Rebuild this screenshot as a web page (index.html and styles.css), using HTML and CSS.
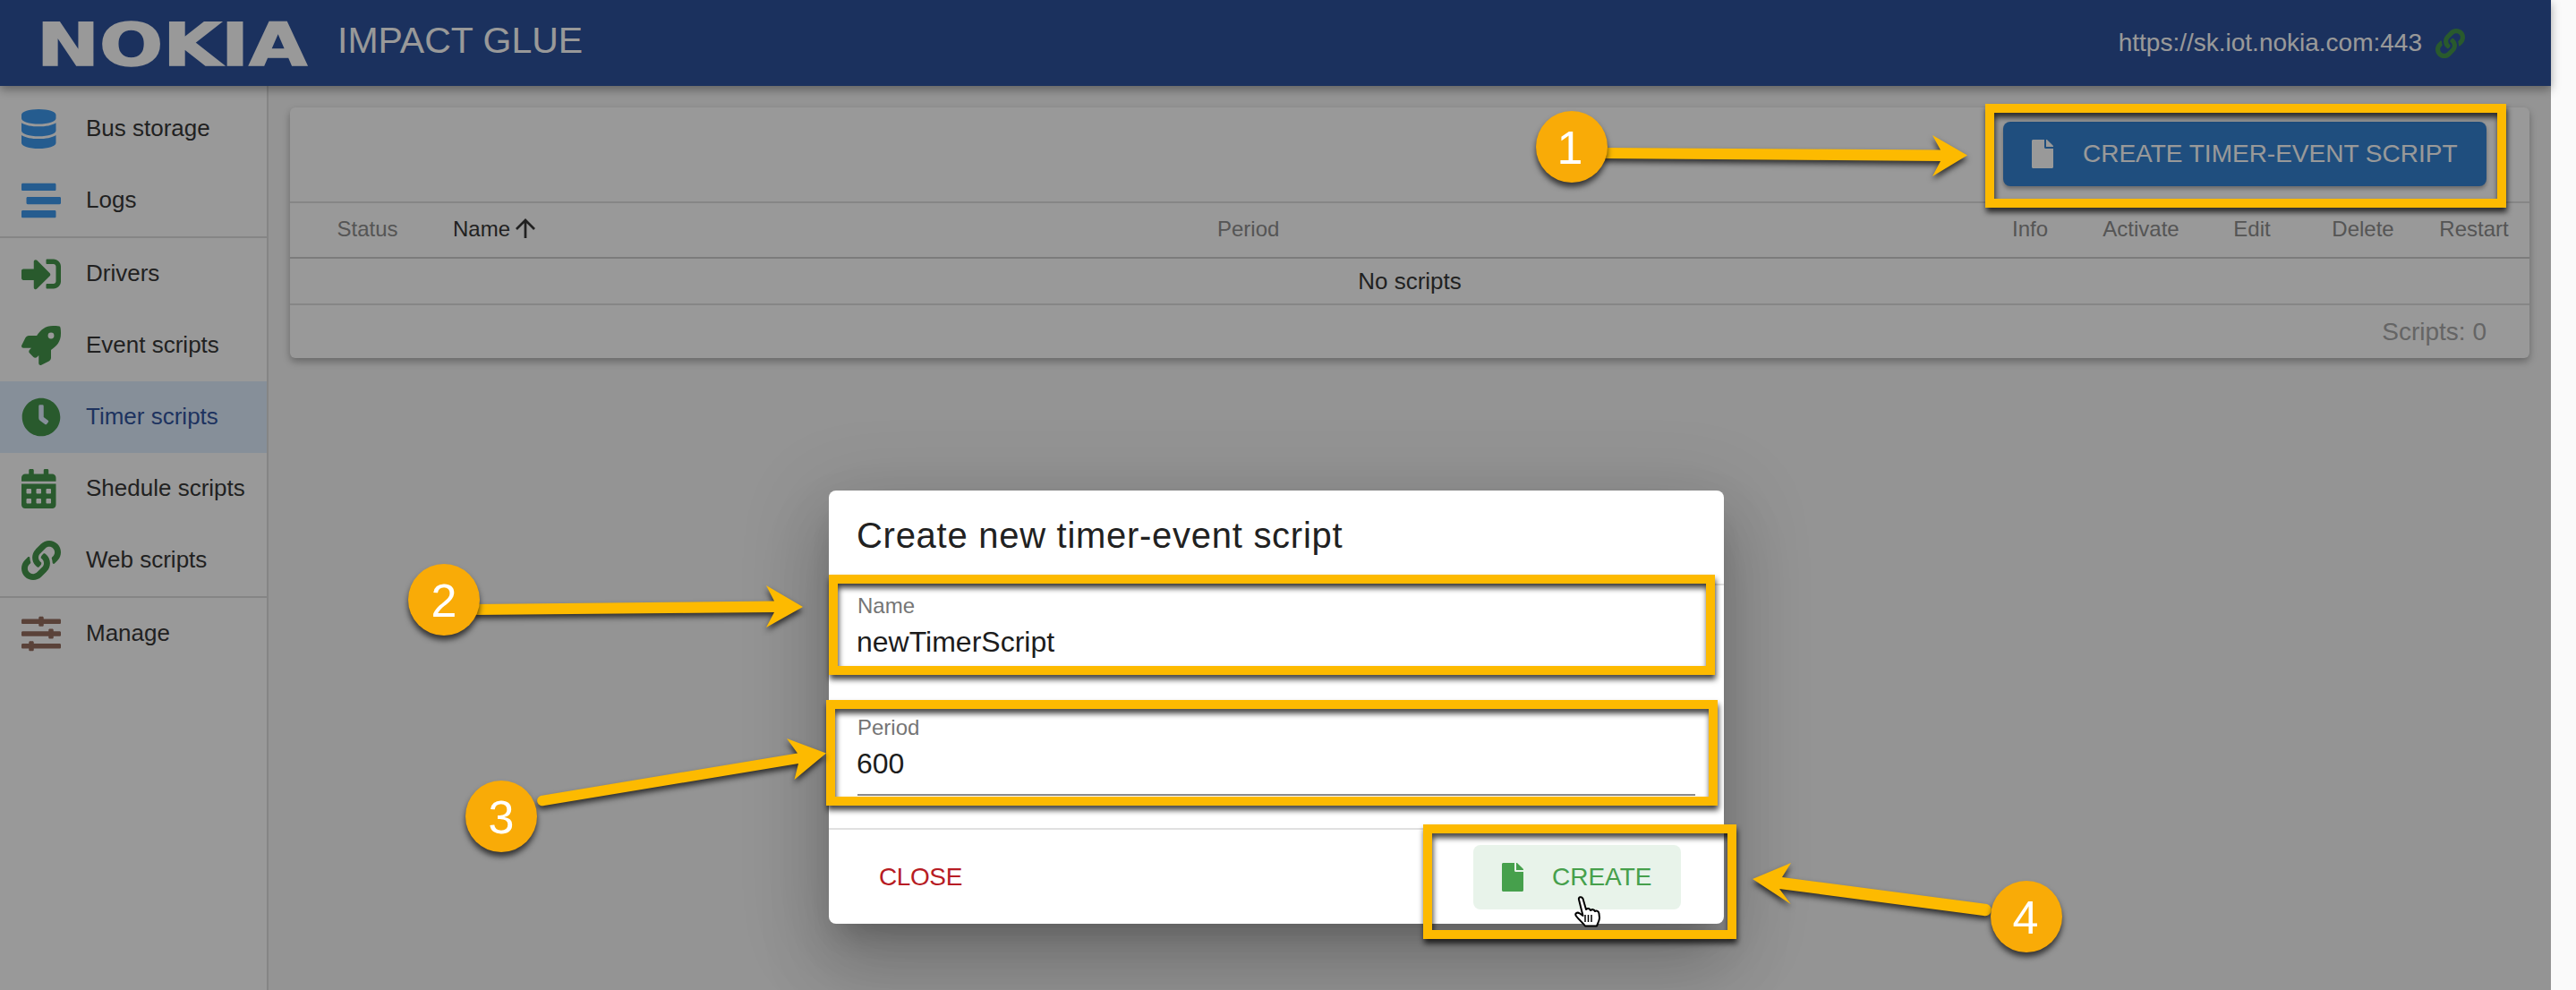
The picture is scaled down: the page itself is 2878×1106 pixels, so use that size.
FILE: index.html
```html
<!DOCTYPE html>
<html lang="en">
<head>
<meta charset="utf-8">
<title>Impact Glue</title>
<link rel="stylesheet" href="styles.css">
</head>
<body>
<div class="app">
  <header class="topbar">
    <svg class="logo" width="297" height="52" viewBox="0 0 297 52"><text class="logo-text" x="-6" y="50" textLength="302" lengthAdjust="spacingAndGlyphs">NOKIA</text></svg>
    <div class="product">IMPACT GLUE</div>
    <div class="server">https://sk.iot.nokia.com:443</div>
    <svg class="server-ico g" viewBox="0 0 512 512"><path d="M326.612 185.391c59.747 59.809 58.927 155.698.36 214.59-.11.12-.24.25-.36.37l-67.2 67.2c-59.27 59.27-155.699 59.262-214.96 0-59.27-59.26-59.27-155.7 0-214.96l37.106-37.106c9.84-9.84 26.786-3.3 27.294 10.606.648 17.722 3.826 35.527 9.69 52.721 1.986 5.822.567 12.262-3.783 16.612l-13.087 13.087c-28.026 28.026-28.905 73.66-1.155 101.96 28.024 28.579 74.086 28.749 102.325.51l67.2-67.19c28.191-28.191 28.073-73.757 0-101.83-3.701-3.694-7.429-6.564-10.341-8.569a16.037 16.037 0 0 1-6.947-12.606c-.396-10.567 3.348-21.456 11.698-29.806l21.054-21.055c5.521-5.521 14.182-6.199 20.584-1.731a152.482 152.482 0 0 1 20.522 17.197zM467.547 44.449c-59.261-59.262-155.69-59.27-214.96 0l-67.2 67.2c-.12.12-.25.25-.36.37-58.566 58.892-59.387 154.781.36 214.59a152.454 152.454 0 0 0 20.521 17.196c6.402 4.468 15.064 3.789 20.584-1.731l21.054-21.055c8.35-8.35 12.094-19.239 11.698-29.806a16.037 16.037 0 0 0-6.947-12.606c-2.912-2.005-6.64-4.875-10.341-8.569-28.073-28.073-28.191-73.639 0-101.83l67.2-67.19c28.239-28.239 74.3-28.069 102.325.51 27.75 28.3 26.872 73.934-1.155 101.96l-13.087 13.087c-4.35 4.35-5.769 10.79-3.783 16.612 5.864 17.194 9.042 34.999 9.69 52.721.509 13.906 17.454 20.446 27.294 10.606l37.106-37.106c59.271-59.259 59.271-155.699.001-214.959z"/></svg>
  </header>
  <div class="body">
    <nav class="side">
      <a class="item"><svg class="ico b" viewBox="0 0 512 512" preserveAspectRatio="xMinYMid"><path d="M448 73.143v45.714C448 159.143 347.667 192 224 192S0 159.143 0 118.857V73.143C0 32.857 100.333 0 224 0s224 32.857 224 73.143zM448 176v102.857C448 319.143 347.667 352 224 352S0 319.143 0 278.857V176c48.125 33.143 136.208 48.572 224 48.572S399.874 209.143 448 176zm0 160v102.857C448 479.143 347.667 512 224 512S0 479.143 0 438.857V336c48.125 33.143 136.208 48.572 224 48.572S399.874 369.143 448 336z"/></svg><span>Bus storage</span></a>
      <a class="item"><svg class="ico b" viewBox="0 0 512 512"><path d="M16 128h416c8.84 0 16-7.16 16-16V48c0-8.84-7.16-16-16-16H16C7.16 32 0 39.16 0 48v64c0 8.84 7.16 16 16 16zm480 80H80c-8.84 0-16 7.16-16 16v64c0 8.84 7.16 16 16 16h416c8.84 0 16-7.16 16-16v-64c0-8.84-7.16-16-16-16zm-64 176H16c-8.84 0-16 7.16-16 16v64c0 8.84 7.16 16 16 16h416c8.84 0 16-7.16 16-16v-64c0-8.84-7.16-16-16-16z"/></svg><span>Logs</span></a>
      <hr class="sep">
      <a class="item"><svg class="ico g" viewBox="0 0 512 512"><path d="M416 448h-84c-6.6 0-12-5.4-12-12v-40c0-6.6 5.4-12 12-12h84c17.7 0 32-14.3 32-32V160c0-17.7-14.3-32-32-32h-84c-6.6 0-12-5.4-12-12V76c0-6.6 5.4-12 12-12h84c53 0 96 43 96 96v192c0 53-43 96-96 96zm-47-201L201 79c-15-15-41-4.5-41 17v96H24c-13.3 0-24 10.7-24 24v96c0 13.3 10.7 24 24 24h136v96c0 21.5 26 32 41 17l168-168c9.3-9.4 9.3-24.6 0-34z"/></svg><span>Drivers</span></a>
      <a class="item"><svg class="ico g" viewBox="0 0 512 512"><path d="M505.12019,19.09375c-1.18945-5.53125-6.65819-11-12.207-12.1875C460.716,0,435.507,0,410.40747,0,307.17523,0,245.26909,55.20312,199.05238,128H94.83772c-16.34763.01562-35.55658,11.875-42.88664,26.48438L2.51562,253.29688A28.4,28.4,0,0,0,0,264a24.00867,24.00867,0,0,0,24.00582,24H127.81618l-22.47457,22.46875c-11.36521,11.36133-12.99607,32.25781,0,45.25L156.24582,406.625c11.15623,11.1875,32.15619,13.15625,45.27726,0l22.47457-22.46875V488a24.00867,24.00867,0,0,0,24.00581,24,28.55934,28.55934,0,0,0,10.707-2.51562l98.72834-49.39063c14.62888-7.29687,26.50776-26.5,26.50776-42.85937V312.79688c72.59753-46.3125,128.03493-108.40626,128.03493-211.09376C512.07526,76.5,512.07526,51.29688,505.12019,19.09375ZM384.04033,168A40,40,0,1,1,424.05,128,40.02322,40.02322,0,0,1,384.04033,168Z"/></svg><span>Event scripts</span></a>
      <a class="item active"><svg class="ico g" viewBox="0 0 512 512"><path d="M256,8C119,8,8,119,8,256S119,504,256,504,504,393,504,256,393,8,256,8Zm92.49,313h0l-20,25a16,16,0,0,1-22.49,2.5h0l-67-49.72a40,40,0,0,1-15-31.23V112a16,16,0,0,1,16-16h32a16,16,0,0,1,16,16V256l58,42.5A16,16,0,0,1,348.49,321Z"/></svg><span>Timer scripts</span></a>
      <a class="item"><svg class="ico g" viewBox="0 0 512 512" preserveAspectRatio="xMinYMid"><path d="M0 464c0 26.5 21.5 48 48 48h352c26.5 0 48-21.5 48-48V192H0v272zm320-196c0-6.6 5.4-12 12-12h40c6.6 0 12 5.4 12 12v40c0 6.6-5.4 12-12 12h-40c-6.6 0-12-5.4-12-12v-40zm0 128c0-6.6 5.4-12 12-12h40c6.6 0 12 5.4 12 12v40c0 6.6-5.4 12-12 12h-40c-6.6 0-12-5.4-12-12v-40zM192 268c0-6.6 5.4-12 12-12h40c6.6 0 12 5.4 12 12v40c0 6.6-5.4 12-12 12h-40c-6.6 0-12-5.4-12-12v-40zm0 128c0-6.6 5.4-12 12-12h40c6.6 0 12 5.4 12 12v40c0 6.6-5.4 12-12 12h-40c-6.6 0-12-5.4-12-12v-40zM64 268c0-6.6 5.4-12 12-12h40c6.6 0 12 5.4 12 12v40c0 6.6-5.4 12-12 12H76c-6.6 0-12-5.4-12-12v-40zm0 128c0-6.6 5.4-12 12-12h40c6.6 0 12 5.4 12 12v40c0 6.6-5.4 12-12 12H76c-6.6 0-12-5.4-12-12v-40zM400 64h-48V16c0-8.8-7.2-16-16-16h-32c-8.8 0-16 7.2-16 16v48H160V16c0-8.8-7.2-16-16-16h-32c-8.8 0-16 7.2-16 16v48H48C21.5 64 0 85.5 0 112v48h448v-48c0-26.5-21.5-48-48-48z"/></svg><span>Shedule scripts</span></a>
      <a class="item"><svg class="ico g" viewBox="0 0 512 512"><path d="M326.612 185.391c59.747 59.809 58.927 155.698.36 214.59-.11.12-.24.25-.36.37l-67.2 67.2c-59.27 59.27-155.699 59.262-214.96 0-59.27-59.26-59.27-155.7 0-214.96l37.106-37.106c9.84-9.84 26.786-3.3 27.294 10.606.648 17.722 3.826 35.527 9.69 52.721 1.986 5.822.567 12.262-3.783 16.612l-13.087 13.087c-28.026 28.026-28.905 73.66-1.155 101.96 28.024 28.579 74.086 28.749 102.325.51l67.2-67.19c28.191-28.191 28.073-73.757 0-101.83-3.701-3.694-7.429-6.564-10.341-8.569a16.037 16.037 0 0 1-6.947-12.606c-.396-10.567 3.348-21.456 11.698-29.806l21.054-21.055c5.521-5.521 14.182-6.199 20.584-1.731a152.482 152.482 0 0 1 20.522 17.197zM467.547 44.449c-59.261-59.262-155.69-59.27-214.96 0l-67.2 67.2c-.12.12-.25.25-.36.37-58.566 58.892-59.387 154.781.36 214.59a152.454 152.454 0 0 0 20.521 17.196c6.402 4.468 15.064 3.789 20.584-1.731l21.054-21.055c8.35-8.35 12.094-19.239 11.698-29.806a16.037 16.037 0 0 0-6.947-12.606c-2.912-2.005-6.64-4.875-10.341-8.569-28.073-28.073-28.191-73.639 0-101.83l67.2-67.19c28.239-28.239 74.3-28.069 102.325.51 27.75 28.3 26.872 73.934-1.155 101.96l-13.087 13.087c-4.35 4.35-5.769 10.79-3.783 16.612 5.864 17.194 9.042 34.999 9.69 52.721.509 13.906 17.454 20.446 27.294 10.606l37.106-37.106c59.271-59.259 59.271-155.699.001-214.959z"/></svg><span>Web scripts</span></a>
      <hr class="sep">
      <a class="item"><svg class="ico br" viewBox="0 0 512 512"><path d="M496 384H160v-16c0-8.8-7.2-16-16-16h-32c-8.8 0-16 7.2-16 16v16H16c-8.8 0-16 7.2-16 16v32c0 8.8 7.2 16 16 16h80v16c0 8.8 7.2 16 16 16h32c8.8 0 16-7.2 16-16v-16h336c8.8 0 16-7.2 16-16v-32c0-8.8-7.2-16-16-16zm0-160h-80v-16c0-8.8-7.2-16-16-16h-32c-8.8 0-16 7.2-16 16v16H16c-8.8 0-16 7.2-16 16v32c0 8.8 7.2 16 16 16h336v16c0 8.8 7.2 16 16 16h32c8.8 0 16-7.2 16-16v-16h80c8.8 0 16-7.2 16-16v-32c0-8.8-7.2-16-16-16zm0-160H288V48c0-8.8-7.2-16-16-16h-32c-8.8 0-16 7.2-16 16v16H16C7.2 64 0 71.2 0 80v32c0 8.8 7.2 16 16 16h208v16c0 8.8 7.2 16 16 16h32c8.8 0 16-7.2 16-16v-16h208c8.8 0 16-7.2 16-16V80c0-8.8-7.2-16-16-16z"/></svg><span>Manage</span></a>
    </nav>
    <main class="main">
      <section class="card">
        <div class="toolbar">
          <button class="btn-primary"><svg class="file" viewBox="0 0 384 512"><path d="M224 136V0H24C10.7 0 0 10.7 0 24v464c0 13.3 10.7 24 24 24h336c13.3 0 24-10.7 24-24V160H248c-13.2 0-24-10.8-24-24zm160-14.1v6.1H256V0h6.1c6.4 0 12.5 2.5 17 7l97.9 98c4.5 4.5 7 10.6 7 16.9z"/></svg><span>CREATE TIMER-EVENT SCRIPT</span></button>
        </div>
        <div class="thead">
          <div class="th">Status</div>
          <div class="th th-name">Name<svg class="sort" viewBox="4 4 16 16"><path d="M4 12l1.41 1.41L11 7.83V20h2V7.83l5.58 5.59L20 12l-8-8-8 8z"/></svg></div>
          <div class="th th-period">Period</div>
          <div class="th">Info</div>
          <div class="th">Activate</div>
          <div class="th">Edit</div>
          <div class="th">Delete</div>
          <div class="th">Restart</div>
        </div>
        <div class="empty">No scripts</div>
        <div class="tfoot">Scripts: 0</div>
      </section>
    </main>
  </div>

  <div class="overlay"></div>

  <div class="dialog">
    <h2 class="dlg-title">Create new timer-event script</h2>
    <div class="dlg-content">
      <div class="field"><div class="flabel">Name</div><div class="fvalue">newTimerScript</div></div>
      <div class="field"><div class="flabel">Period</div><div class="fvalue">600</div></div>
    </div>
    <div class="dlg-actions">
      <button class="btn-close">CLOSE</button>
      <button class="btn-create"><svg class="file" viewBox="0 0 384 512"><path d="M224 136V0H24C10.7 0 0 10.7 0 24v464c0 13.3 10.7 24 24 24h336c13.3 0 24-10.7 24-24V160H248c-13.2 0-24-10.8-24-24zm160-14.1v6.1H256V0h6.1c6.4 0 12.5 2.5 17 7l97.9 98c4.5 4.5 7 10.6 7 16.9z"/></svg><span>CREATE</span></button>
    </div>
  </div>

  <div class="mark mark1"></div>
  <div class="mark mark2"></div>
  <div class="mark mark3"></div>
  <div class="mark mark4"></div>

  <svg class="notes" width="2878" height="1106" viewBox="0 0 2878 1106">
    <g class="arrow">
      <polygon points="1790,165 2168,167.5 2159,151 2198,173.5 2159,197 2168,180 1790,177"/>
      <polygon points="530,675 865,671.5 856,654 897,678 856,701 865,684 530,687"/>
      <path d="M604 889 L891 841.5 L879 825 L923 841.5 L887.5 871 L892 853 L608 900 A5.8 5.8 0 0 1 604 889Z"/>
      <path d="M2216 1023 L1988 993 L2000.7 1010 L1958 982 L2001 964 L1991 980 L2220 1010 A6.5 6.5 0 0 1 2216 1023Z"/>
    </g>
    <g class="badge"><circle cx="1756" cy="164" r="40"/><text x="1754" y="183">1</text></g>
    <g class="badge"><circle cx="496" cy="670" r="40"/><text x="496" y="689">2</text></g>
    <g class="badge"><circle cx="560" cy="912" r="40"/><text x="560" y="931">3</text></g>
    <g class="badge"><circle cx="2264" cy="1024" r="40"/><text x="2263" y="1043">4</text></g>
    <g class="hand">
      <path d="M1764 1005c-1-3 3-4 4.500-1l3.500 12c2-2 4-1 5 1 2-1.500 4-1 5 1 2-1 4 0 4.500 2.500l.5 5c0 3-2 6-3 9h-13c-2-3-7-7-10-11-2-3 1-5 4-3l3.500 2.500z"/>
      <path class="hand-bars" d="M1771 1022v8M1774.500 1022v8M1778 1022v8"/>
    </g>
  </svg>
</div>
</body>
</html>
```
FILE: styles.css
```css
* { box-sizing: border-box; }
html, body { margin: 0; padding: 0; }
body {
  width: 2878px;
  height: 1106px;
  overflow: hidden;
  background: #fafafa;
  font-family: "Liberation Sans", Arial, sans-serif;
  color: #383838;
}
.app {
  position: relative;
  width: 2850px;
  height: 1106px;
  display: flex;
  flex-direction: column;
  background: #f7f7f7;
}
.topbar {
  position: relative;
  z-index: 2;
  flex: 0 0 96px;
  display: flex;
  align-items: center;
  padding-left: 47px;
  background: #2d539d;
  color: #fff;
  box-shadow: 0 4px 10px rgba(0, 0, 0, .35);
}
.logo { flex: none; margin-top: 1px; overflow: visible; }
.logo-text {
  font-family: "DejaVu Sans", sans-serif;
  font-weight: 700;
  font-size: 65px;
  fill: #ffffff;
  stroke: #ffffff;
  stroke-width: 1.500px;
}
.product {
  margin-left: 33px;
  font-size: 41px;
  line-height: 44px;
  margin-top: -6px;
}
.server {
  margin-left: auto;
  font-size: 28px;
  line-height: 32px;
}
.server-ico {
  width: 33px;
  height: 33px;
  margin: 0 96px 0 15px;
}
.body { flex: 1; display: flex; min-height: 0; }
.side {
  flex: 0 0 300px;
  padding-top: 8px;
  background: #fff;
  border-right: 2px solid #dedede;
}
.item {
  height: 80px;
  display: flex;
  align-items: center;
  padding-left: 24px;
  font-size: 26px;
  color: #383838;
}
.item span { margin-bottom: 2px; }
.item.active { background: #e0eeff; color: #33559f; }
.ico { flex: none; width: 44px; height: 44px; margin-right: 28px; }
.b { fill: #3f9aee; }
.g { fill: #45964c; }
.br { fill: #966e60; }
.sep { height: 2px; margin: 0; border: 0; background: #dedede; }
.main { flex: 1; padding: 24px; min-width: 0; }
.card {
  height: 280px;
  background: #fff;
  border-radius: 6px;
  box-shadow: 0 4px 8px rgba(0, 0, 0, .3);
  display: flex;
  flex-direction: column;
}
.toolbar {
  flex: 0 0 107px;
  display: flex;
  justify-content: flex-end;
  padding: 16px 48px 0 0;
  border-bottom: 2px solid #e0e0e0;
}
.btn-primary {
  height: 72px;
  width: 540px;
  display: flex;
  align-items: center;
  gap: 33px;
  padding: 0 0 0 32px;
  border: 0;
  border-radius: 8px;
  background: #3482d2;
  color: #fff;
  font: 28px "Liberation Sans", Arial, sans-serif;
  box-shadow: 0 3px 4px rgba(0, 0, 0, .3);
}
.file { flex: none; width: 24px; height: 32px; fill: currentColor; }
.thead {
  flex: 0 0 62px;
  display: grid;
  grid-template-columns: 173px 260px 1fr repeat(5, 124px);
  align-items: center;
  padding-bottom: 2px;
  border-bottom: 2px solid #cfcfcf;
  font-size: 24px;
  color: #8e8e8e;
}
.th { text-align: center; }
.th-name { display: flex; align-items: center; padding-left: 9px; color: #383838; }
.th-period { text-align: left; padding-left: 603px; }
.sort { width: 22px; height: 22px; margin: -3px 0 0 6px; fill: currentColor; }
.empty {
  flex: 0 0 52px;
  display: flex;
  align-items: center;
  justify-content: center;
  border-bottom: 2px solid #e0e0e0;
  font-size: 26px;
  color: #383838;
}
.tfoot {
  flex: 1;
  display: flex;
  align-items: center;
  justify-content: flex-end;
  padding-right: 48px;
  font-size: 28px;
  color: #a8a8a8;
}
.overlay {
  position: absolute;
  inset: 0;
  z-index: 3;
  background: rgba(0, 0, 0, .4);
}
.dialog {
  position: absolute;
  z-index: 4;
  left: 926px;
  top: 548px;
  width: 1000px;
  height: 484px;
  display: flex;
  flex-direction: column;
  border-radius: 8px;
  background: #fff;
  box-shadow: 0 22px 30px -14px rgba(0, 0, 0, .2), 0 48px 76px 6px rgba(0, 0, 0, .14), 0 18px 92px 16px rgba(0, 0, 0, .12);
}
.dlg-title {
  flex: 0 0 106px;
  margin: 0;
  padding: 0 32px 4px 31px;
  display: flex;
  align-items: center;
  border-bottom: 2px solid #e0e0e0;
  font-size: 40px;
  font-weight: 400;
  letter-spacing: .72px;
  color: #212121;
}
.dlg-content {
  flex: 0 0 273px;
  padding: 9px 32px 0;
  display: flex;
  flex-direction: column;
  gap: 46px;
  border-bottom: 2px solid #e0e0e0;
}
.field { padding-bottom: 16px; border-bottom: 2px solid #8c8c8c; }
.flabel { font-size: 24px; line-height: 28px; color: #757575; }
.fvalue { margin: 8px 0 0 -1px; font-size: 32px; line-height: 36px; color: #1c1c1c; }
.dlg-actions {
  flex: 1;
  display: flex;
  align-items: center;
  justify-content: space-between;
  padding: 0 48px 0 56px;
}
.btn-close, .btn-create {
  border: 0;
  background: none;
  padding: 0;
  font: 28px "Liberation Sans", Arial, sans-serif;
}
.btn-close { color: #b71c24; letter-spacing: -.4px; }
.btn-create {
  width: 232px;
  height: 72px;
  display: flex;
  align-items: center;
  gap: 32px;
  padding-left: 32px;
  border-radius: 8px;
  background: #e8f3ea;
  color: #46a04c;
}
.mark {
  position: absolute;
  z-index: 5;
  border: 10px solid #fdba00;
  filter: drop-shadow(1px 5px 3px rgba(0, 0, 0, .75));
}
.mark1 { left: 2218px; top: 116px; width: 582px; height: 116px; }
.mark2 { left: 926px; top: 642px; width: 990px; height: 112px; }
.mark3 { left: 923px; top: 782px; width: 996px; height: 118px; }
.mark4 { left: 1590px; top: 921px; width: 350px; height: 128px; }
.notes { position: absolute; z-index: 6; left: 0; top: 0; }
.arrow { fill: #fdba00; filter: drop-shadow(0 4px 3px rgba(0, 0, 0, .7)); }
.badge circle { fill: #f9ab07; filter: drop-shadow(0 5px 3px rgba(0, 0, 0, .65)); }
.badge text {
  fill: #fff;
  font-family: "Liberation Sans", Arial, sans-serif;
  font-size: 52px;
  text-anchor: middle;
}
.hand { fill: #fff; stroke: #000; stroke-width: 2; stroke-linejoin: round; }
.hand-bars { fill: none; stroke-width: 1.500; }
```
